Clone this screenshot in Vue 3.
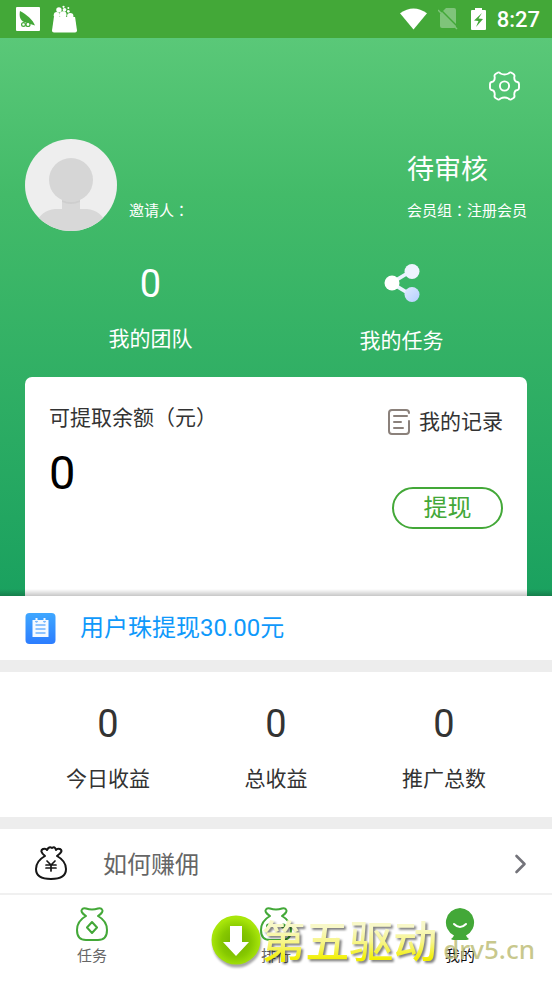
<script setup>
const team = { value: 0, label: '我的团队' }
const stats = [
  { value: 0, label: '今日收益' },
  { value: 0, label: '总收益' },
  { value: 0, label: '推广总数' },
]
</script>

<template>
  <div class="page">
    <header class="status">
      <div class="status-group">
        <svg class="app-icon" viewBox="0 0 24 24" aria-hidden="true">
          <rect width="24" height="24" rx="1" fill="#fff" />
          <path d="M4 4c-1 5 0 9 4 11l11 3.500C17 13 10 7 4 4z" fill="#43a838" />
          <g fill="#fff" stroke="#43a838" stroke-width="1.200">
            <circle cx="7.500" cy="17.500" r="1.900" />
            <circle cx="12" cy="17.500" r="2" />
          </g>
        </svg>
        <svg class="bag-icon" viewBox="0 0 26 28" fill="#fff" aria-hidden="true">
          <path d="M2 12h22l2 14q0 2-2 2H2q-2 0-2-2z" />
          <circle cx="5" cy="10" r="3.200" />
          <circle cx="11.500" cy="9.500" r="3.600" />
          <circle cx="19" cy="11" r="3.300" />
          <circle cx="7.200" cy="4.500" r="2.800" />
          <circle cx="13" cy="4.500" r="1.900" />
          <circle cx="12" cy="1.300" r="1.200" />
          <circle cx="17" cy="6" r="1.400" />
          <circle cx="17" cy="2.500" r="1" />
        </svg>
      </div>
      <div class="status-group right">
        <svg class="wifi" viewBox="0 0 28 22" aria-hidden="true">
          <path d="M14 22L0 5Q14-5 28 5z" fill="#fff" />
        </svg>
        <svg class="sim" viewBox="0 0 20 22" aria-hidden="true">
          <path d="M8 0h8q2 0 2 2v16q0 2-2 2H4q-2 0-2-2V6z" fill="#7fc47a" />
          <path d="M1 0l19 19" stroke="#43a838" stroke-width="1.500" />
          <path d="M0 2l19 19" stroke="#7fc47a" stroke-width="1.500" />
        </svg>
        <svg class="battery" viewBox="0 0 15 22" aria-hidden="true">
          <path d="M4 0h7v2h3q1 0 1 1v18q0 1-1 1H1q-1 0-1-1V3q0-1 1-1h3z" fill="#fff" />
          <path d="M11 5L3 12.500l4.500.500L5 19l7-8-4.500-.500z" fill="#43a838" />
        </svg>
        <time class="clock">8:27</time>
      </div>
    </header>

    <main>
      <section class="hero">
        <div class="toolbar">
          <button class="plain" type="button" aria-label="设置">
            <svg class="gear" viewBox="0 0 31 30" fill="none" stroke="#fff" stroke-width="1.900" stroke-linejoin="round" aria-hidden="true">
              <path d="M9 1.500Q10 1 11.500 2.500 15.500 4.500 19.500 2.500 21 1 22 1.500L24.500 3Q26 4 25.300 6 25 10.500 28.500 11 30 11.500 30 13V17Q30 18.500 28.500 19 25 19.500 25.300 24 26 26 24.500 27L22 28.500Q21 29 19.500 27.500 15.500 25.500 11.500 27.500 10 29 9 28.500L6.500 27Q5 26 5.700 24 6 19.500 2.500 19 1 18.500 1 17V13Q1 11.500 2.500 11 6 10.500 5.700 6 5 4 6.500 3z" />
              <circle cx="15.500" cy="15" r="4.600" />
            </svg>
          </button>
        </div>

        <div class="profile">
          <svg class="avatar" viewBox="0 0 92 92" role="img" aria-label="头像">
            <defs><clipPath id="face"><circle cx="46" cy="46" r="46" /></clipPath></defs>
            <g clip-path="url(#face)">
              <rect width="92" height="92" fill="#eee" />
              <path d="M37 58h18v12h7q14 1 20 16v8H10v-8q6-15 20-16h7z" fill="#d8d8d8" />
              <path d="M37 61q9 4 18 0v2q-9 4-18 0z" fill="#cecece" />
              <circle cx="46" cy="41" r="22" fill="#d6d6d6" />
            </g>
          </svg>
          <p class="inviter">邀请人<span class="colon">：</span></p>
          <div class="member">
            <strong>待审核</strong>
            <p>会员组<span class="colon">：</span>注册会员</p>
          </div>
        </div>

        <div class="shortcuts">
          <a href="#team" class="shortcut">
            <span class="figure">{{ team.value }}</span>
            <span class="caption">{{ team.label }}</span>
          </a>
          <a href="#tasks" class="shortcut tasks">
            <svg class="share" viewBox="0 0 36 40" aria-hidden="true">
              <defs>
                <linearGradient id="node" x1="0" y1="0" x2="1" y2="1">
                  <stop offset="0" stop-color="#dfe9ff" />
                  <stop offset="1" stop-color="#b4d0ff" />
                </linearGradient>
              </defs>
              <path d="M7 18L27 6l2 3L11 20l18 11-2 3L7 22z" fill="#eaf2ff" />
              <circle cx="8" cy="20" r="7.500" fill="#fff" />
              <circle cx="28" cy="8.500" r="7.500" fill="#eef3ff" />
              <circle cx="28" cy="31.500" r="7.500" fill="url(#node)" />
            </svg>
            <span class="caption">我的任务</span>
          </a>
        </div>

        <div class="wallet">
          <div class="balance">
            <p class="caption">可提取余额（元）</p>
            <p class="amount">0</p>
          </div>
          <div class="wallet-side">
            <a href="#records" class="records">
              <svg class="doc" viewBox="0 0 22 26" fill="none" stroke="#8b817b" stroke-width="2" stroke-linecap="round" aria-hidden="true">
                <path d="M21 4q0-3-3-3H4Q1 1 1 4v18q0 3 3 3h14q3 0 3-3V12M6 7h13M6 13h7M6 19h9" />
              </svg>
              <span class="caption">我的记录</span>
            </a>
            <button class="withdraw" type="button">提现</button>
          </div>
        </div>
      </section>

      <section class="notice">
        <svg class="note" viewBox="0 0 30 31" aria-hidden="true">
          <defs>
            <linearGradient id="blue" x1="0" y1="0" x2="0" y2="1">
              <stop offset="0" stop-color="#3fa7ff" /><stop offset="1" stop-color="#2c7dff" />
            </linearGradient>
          </defs>
          <rect width="30" height="31" rx="4" fill="url(#blue)" />
          <path d="M7 7h3V5h2v2h6V5h2v2h3v17H7z" fill="#f5faff" />
          <path d="M10 8q1 2 2 0M18 8q1 2 2 0M10 12h10M10 16h10M10 20h10" fill="none" stroke="#6db2ff" stroke-width="1.500" />
        </svg>
        <p>用户珠提现30.00元</p>
      </section>

      <section class="stats">
        <div v-for="item in stats" :key="item.label" class="stat">
          <span class="figure">{{ item.value }}</span>
          <span class="caption">{{ item.label }}</span>
        </div>
      </section>

      <a href="#guide" class="guide">
        <svg class="pouch" viewBox="0 0 32 34" fill="none" stroke="#161616" stroke-width="2" stroke-linecap="round" stroke-linejoin="round" aria-hidden="true">
          <path d="M10 10Q4 5 8 3q3-1 4 1 2-4 5-2 3-2 4 2 1-2 4-1 4 2-3 7 9 5 9 13 0 10-15 10T1 23q0-8 9-13z" />
          <path d="M12 15l4 4 4-4M11 19h10M11 22h10M16 19v6" stroke-width="1.700" />
        </svg>
        <span>如何赚佣</span>
        <svg class="chevron" viewBox="0 0 12 20" fill="none" stroke="#73737a" stroke-width="2.600" stroke-linecap="round" stroke-linejoin="round" aria-hidden="true">
          <path d="M2 2l8 8-8 8" />
        </svg>
      </a>
    </main>

    <nav class="tabs">
      <a href="#home" class="tab">
        <svg viewBox="0 0 32 34" fill="none" stroke="#43a838" stroke-width="2" stroke-linejoin="round" aria-hidden="true">
          <path d="M10 9Q4 5 6 2.500q1-2 4-1 6 2 12 0 3-1 4 1 2 2.500-4 6.500 9 5 9 14 0 10-9 10H10q-9 0-9-10 0-9 9-14zM16 15l5 5.500-5 5.500-5-5.500z" />
        </svg>
        <span>任务</span>
      </a>
      <a href="#rank" class="tab">
        <svg viewBox="0 0 32 34" fill="none" stroke="#43a838" stroke-width="2" stroke-linejoin="round" aria-hidden="true">
          <path d="M10 9Q4 5 6 2.500q1-2 4-1 6 2 12 0 3-1 4 1 2 2.500-4 6.500 9 5 9 14 0 10-9 10H10q-9 0-9-10 0-9 9-14z" />
          <circle cx="8.500" cy="19" r="1.500" />
          <circle cx="23.500" cy="19" r="1.500" />
        </svg>
        <span>排行</span>
      </a>
      <a href="#mine" class="tab active" aria-current="page">
        <svg viewBox="0 0 32 34" aria-hidden="true">
          <path d="M16 1a14.500 14.500 0 0 1 6 27.500q1 2 3 3.500-1 1-3 1H10q-2 0-3-1 2-1.500 3-3.500A14.500 14.500 0 0 1 16 1z" fill="#43a838" />
          <path d="M10 17q6 6 12 0" fill="none" stroke="#fff" stroke-width="2" stroke-linecap="round" />
        </svg>
        <span>我的</span>
      </a>
      <div class="watermark">
        <svg class="badge" viewBox="0 0 50 50" aria-hidden="true">
          <defs>
            <radialGradient id="lime" cx=".5" cy=".55" r=".5">
              <stop offset="0" stop-color="#6fae00" />
              <stop offset=".6" stop-color="#86c800" />
              <stop offset="1" stop-color="#a8e60a" />
            </radialGradient>
          </defs>
          <circle cx="25" cy="25" r="24.500" fill="url(#lime)" />
          <path d="M19 11h12v16h7L25 41 12 27h7z" fill="#fff" />
        </svg>
        <span class="brand">第五驱动</span>
        <span class="domain">drv5.cn</span>
      </div>
    </nav>
  </div>
</template>

<style>
body {
  margin: 0;
}
</style>

<style scoped>
.page {
  display: flex;
  flex-direction: column;
  min-height: 100vh;
  background: #fff;
  color: #333;
  font-family: Roboto, "Noto Sans CJK SC", sans-serif;
}
p {
  margin: 0;
}
a {
  color: inherit;
  text-decoration: none;
}
svg {
  display: block;
  flex: none;
}
button {
  font: inherit;
  cursor: pointer;
}
.status {
  display: flex;
  align-items: center;
  justify-content: space-between;
  height: 38px;
  padding: 0 12px 0 16px;
  background: #43a838;
  color: #fff;
}
.status-group {
  display: flex;
  align-items: center;
  gap: 12px;
}
.right {
  gap: 11px;
}
.app-icon {
  width: 24px;
  height: 24px;
}
.bag-icon {
  width: 25px;
  height: 28px;
}
.wifi {
  width: 27px;
  height: 22px;
}
.sim {
  width: 20px;
  height: 22px;
}
.battery {
  width: 15px;
  height: 22px;
  margin-left: 2px;
}
.clock {
  padding-top: 2px;
  font-size: 22px;
  font-weight: 500;
  line-height: 36px;
}
.hero {
  position: relative;
  padding: 33px 25px 0;
  background: linear-gradient(#5ac878, #43bb69 28%, #1aa15f);
}
.hero::after {
  content: "";
  position: absolute;
  inset: auto 0 0;
  height: 7px;
  background: linear-gradient(transparent, rgb(0 0 0 / 22%));
}
.toolbar {
  display: flex;
  justify-content: flex-end;
  padding-right: 7px;
}
.plain {
  padding: 0;
  border: 0;
  background: none;
}
.gear {
  width: 31px;
  height: 30px;
}
.profile {
  display: flex;
  align-items: flex-end;
  margin-top: 38px;
  color: #fff;
  font-size: 15px;
  line-height: 20px;
}
.avatar {
  width: 92px;
  height: 92px;
}
.colon {
  font-family: "Noto Sans CJK TC", sans-serif;
}
.inviter {
  padding: 0 0 10px 12px;
}
.member {
  margin-left: auto;
  padding-bottom: 10px;
}
.member strong {
  display: block;
  margin-bottom: 10px;
  font-size: 27px;
  font-weight: 400;
  line-height: 40px;
}
.shortcuts {
  display: grid;
  grid-template-columns: 1fr 1fr;
  padding: 31px 0 20px;
  color: #fff;
}
.shortcut,
.stat {
  display: flex;
  flex-direction: column;
  align-items: center;
}
.figure {
  font-size: 38px;
  line-height: 44px;
}
.caption {
  font-size: 21px;
  line-height: 32px;
}
.shortcut .caption {
  margin-top: 17px;
}
.shortcut.tasks .caption {
  margin-top: 22px;
}
.share {
  width: 36px;
  height: 40px;
  margin-top: 1px;
}
.wallet {
  display: flex;
  justify-content: space-between;
  min-height: 194px;
  padding: 25px 24px 0;
  border-radius: 7px 7px 0 0;
  background: #fff;
}
.amount {
  margin-top: 12px;
  color: #000;
  font-size: 47px;
  line-height: 54px;
}
.wallet-side {
  display: flex;
  flex-direction: column;
  align-items: flex-end;
  padding-top: 4px;
}
.records {
  display: flex;
  align-items: center;
  gap: 9px;
}
.doc {
  width: 22px;
  height: 26px;
}
.withdraw {
  width: 111px;
  height: 42px;
  margin-top: 49px;
  padding: 0;
  border: 2px solid #43a838;
  border-radius: 21px;
  background: #fff;
  color: #43a838;
  font-size: 24px;
  line-height: 38px;
}
.notice {
  display: flex;
  align-items: center;
  gap: 24px;
  height: 64px;
  padding: 0 25px;
  border-bottom: 12px solid #ededed;
  color: #0f99fb;
  font-size: 24px;
}
.notice p {
  line-height: 36px;
}
.note {
  width: 31px;
  height: 31px;
}
.stats {
  display: grid;
  grid-template-columns: repeat(3, 1fr);
  padding: 30px 24px 22px;
  border-bottom: 12px solid #ededed;
}
.stats .caption {
  margin-top: 17px;
}
.guide {
  display: flex;
  align-items: center;
  height: 64px;
  padding: 0 25px 0 35px;
  color: #666;
  font-size: 24px;
  line-height: 36px;
}
.guide span {
  flex: 1;
  padding: 8px 0 0 36px;
}
.pouch {
  width: 32px;
  height: 34px;
  margin-top: 4px;
}
.chevron {
  width: 13px;
  height: 20px;
  margin-top: 6px;
}
.tabs {
  position: relative;
  display: grid;
  flex: 1;
  grid-template-columns: repeat(3, 1fr);
  border-top: 2px solid #f0f0f0;
}
.tab {
  display: flex;
  flex-direction: column;
  align-items: center;
  gap: 4px;
  padding-top: 12px;
  color: #666;
  font-size: 15px;
  line-height: 22px;
}
.tab svg {
  width: 32px;
  height: 34px;
}
.active {
  color: #111;
}
.watermark {
  position: absolute;
  right: 17px;
  bottom: 10px;
  display: flex;
  align-items: center;
  pointer-events: none;
}
.badge {
  width: 50px;
  height: 50px;
  margin-bottom: 4px;
  filter: drop-shadow(1px 3px 1px rgb(0 0 0 / 35%));
}
.brand {
  padding-top: 2px;
  background: linear-gradient(#f8f8c8 25%, #f7f58a 50%, #f2f000 80%);
  background-clip: text;
  color: transparent;
  font-size: 44px;
  font-weight: 500;
  line-height: 56px;
  filter: drop-shadow(2px 2px 1px rgb(0 0 0 / 50%));
}
.domain {
  padding: 14px 0 0 6px;
  color: rgb(190 190 120 / 85%);
  font-family: "Noto Sans", sans-serif;
  font-size: 26px;
  font-weight: 500;
  line-height: 32px;
}
</style>
